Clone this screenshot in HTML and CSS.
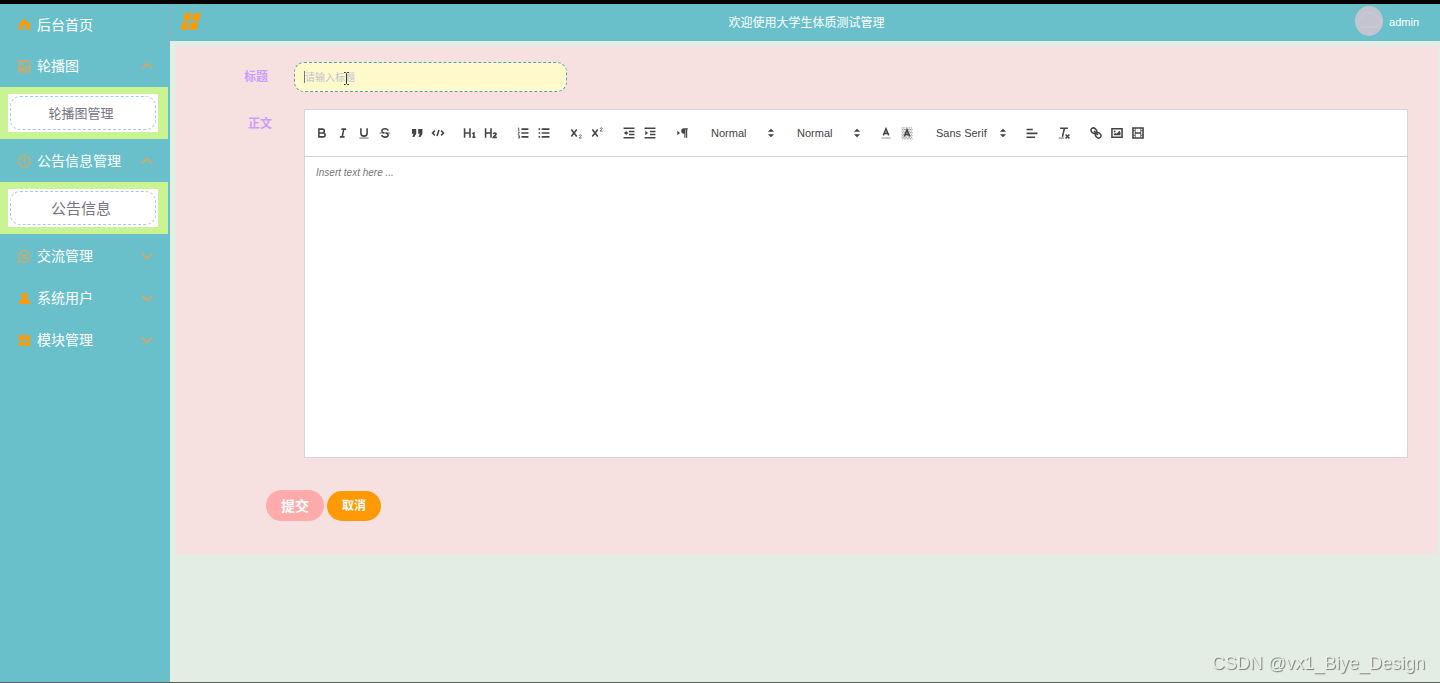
FILE: index.html
```
<!DOCTYPE html>
<html lang="zh-CN">
<head>
    <meta charset="UTF-8">
    <meta name="viewport" content="width=device-width, initial-scale=1.0">
    <link rel="stylesheet" href="styles.css">
    <title>大学生体质测试管理</title>
</head>
<body>

<div class="layout">
    <nav class="sidebar">
        <a href="#" class="menu-item menu-home">
            <svg class="menu-icon" viewBox="0 0 12 12"><path d="M6 .8 11 5v6H7.6V7.6a1.6 1.6 0 0 0-3.2 0V11H1V5z" fill="currentColor"/></svg>
            <span>后台首页</span>
        </a>
        <button type="button" class="menu-item">
            <svg class="menu-icon line" viewBox="0 0 12 12"><path d="M1 1h10v10H1zM1.500 9.500 4 7l1.500 1.300L8 5.500l2.800 3M3 9.500h6"/><circle cx="4" cy="4" r=".8"/></svg>
            <span>轮播图</span>
            <svg class="arrow" viewBox="0 0 12 12"><path d="M1 8.5 6 3.5l5 5"/></svg>
        </button>
        <div class="submenu">
            <a href="#" class="submenu-box"><span class="submenu-link">轮播图管理</span></a>
        </div>
        <button type="button" class="menu-item">
            <svg class="menu-icon line" viewBox="0 0 12 12"><circle cx="6" cy="6" r="5.3"/><path d="M6 3v4.500M6 8.300v1"/></svg>
            <span>公告信息管理</span>
            <svg class="arrow" viewBox="0 0 12 12"><path d="M1 8.5 6 3.5l5 5"/></svg>
        </button>
        <div class="submenu">
            <a href="#" class="submenu-box"><span class="submenu-link large">公告信息</span></a>
        </div>
        <button type="button" class="menu-item">
            <svg class="menu-icon line" viewBox="0 0 12 12"><path d="M1 11.200 1.700 9A5.200 5.200 0 1 1 3.500 10.600zM4 5.200h4M4 7.300h4"/></svg>
            <span>交流管理</span>
            <svg class="arrow" viewBox="0 0 12 12"><path d="m1 3.500 5 5 5-5"/></svg>
        </button>
        <button type="button" class="menu-item">
            <svg class="menu-icon" viewBox="0 0 12 12"><path d="M6 .8a3 3 0 0 1 1.700 5.500C9.900 7 11 8.800 11.300 11H.7C1 8.800 2.100 7 4.300 6.300A3 3 0 0 1 6 .8z" fill="currentColor"/></svg>
            <span>系统用户</span>
            <svg class="arrow" viewBox="0 0 12 12"><path d="m1 3.500 5 5 5-5"/></svg>
        </button>
        <button type="button" class="menu-item">
            <svg class="menu-icon" viewBox="0 0 12 12"><path d="M1 1h4.500v4.500H1zM6.500 1H11v4.500H6.500zM1 6.500h4.500V11H1zM6.500 6.500H11V11H6.500z" fill="currentColor"/></svg>
            <span>模块管理</span>
            <svg class="arrow" viewBox="0 0 12 12"><path d="m1 3.500 5 5 5-5"/></svg>
        </button>
    </nav>

    <div class="main">
        <header class="header">
            <button type="button" class="logo" aria-label="菜单">
                <svg width="22" height="20" viewBox="0 0 22 20"><path d="M5 1h6.500l-2 8H3zM13.500 1h7.500l-2 8h-7.500zM2.500 10.500H9L7 18H.5zM11 10.500h7.500l-2 7.500H9z" fill="#ff9a05"/></svg>
            </button>
            <h1 class="title">欢迎使用大学生体质测试管理</h1>
            <a href="#" class="user">
                <svg width="28" height="30" viewBox="0 0 28 30"><ellipse cx="14" cy="15" rx="14" ry="15" fill="#c3c4cf"/><path d="M8 21a4.500 4.500 0 0 1-1-9 7 7 0 0 1 13-2 5.500 5.500 0 0 1 1 11zM11 25h1M15 26h1" fill="none" stroke="#cdccd4"/></svg>
                <span>admin</span>
            </a>
        </header>

        <form class="panel">
            <div class="field">
                <label class="field-label" for="title">标题</label>
                <div class="title-wrap">
                    <input type="text" id="title" class="title-input" placeholder="请输入标题">
                    <span class="caret"></span>
                    <svg class="pointer" width="7" height="13" viewBox="0 0 7 13"><path d="M1 .5h1.500l1 1 1-1H6M3.500 1.500v10M1 12.500h1.500l1-1 1 1H6" fill="none" stroke="#333"/></svg>
                </div>
            </div>
            <div class="field">
                <label class="field-label wide" for="content">正文</label>
                <div class="editor">
                    <div class="toolbar">
                        <div class="group">
                            <button type="button" aria-label="bold"><svg viewBox="0 0 18 18"><path d="M5 4h4.500a2.500 2.500 0 0 1 0 5H5zM5 9h5.500a2.500 2.500 0 0 1 0 5H5z"/></svg></button>
                            <button type="button" aria-label="italic"><svg viewBox="0 0 18 18"><path d="M7 4h6M5 14h6M8 14l2-10"/></svg></button>
                            <button type="button" aria-label="underline"><svg viewBox="0 0 18 18"><path d="M5 3v6a4 4 0 0 0 8 0V3"/><path class="thin" d="M3 15.500h12"/></svg></button>
                            <button type="button" aria-label="strike"><svg viewBox="0 0 18 18"><path class="thin" d="M2 9h14"/><path d="M13 6c-.5-3-7.500-3.300-8 0 0 1.500 1 2.300 3 3M10 9c2 .6 3.200 1.500 3 3-.5 3.300-8 3-8-.3"/></svg></button>
                        </div>
                        <div class="group">
                            <button type="button" aria-label="blockquote"><svg viewBox="0 0 18 18"><path class="fill" d="M2.500 4H8v6l-2.500 4H3l1.500-4h-2zM10.500 4H16v6l-2.500 4H11l1.500-4h-2z"/></svg></button>
                            <button type="button" aria-label="code"><svg viewBox="0 0 18 18"><path d="M5 6 2 9l3 3M13 6l3 3-3 3M10.300 5 7.700 13"/></svg></button>
                        </div>
                        <div class="group">
                            <button type="button" aria-label="header 1"><svg viewBox="0 0 18 18"><path d="M2 3v12M9 3v12M2 9h7M12 10l2-1v5.500M12 14.500h4"/></svg></button>
                            <button type="button" aria-label="header 2"><svg viewBox="0 0 18 18"><path d="M2 3v12M9 3v12M2 9h7M12 10.300c.3-2 4-1.600 3.500.3-.3 1.400-2.500 2-3.500 4h4.500"/></svg></button>
                        </div>
                        <div class="group">
                            <button type="button" aria-label="ordered list"><svg viewBox="0 0 18 18"><path d="M7 4h9M7 9h9M7 14h9"/><path class="thin" d="M2.500 5.500h2M3.500 5.500v-3l-1 .5M2.500 7.800h2l-2 2.700h2M2.500 12.500h2v3h-2M3 14h1.500"/></svg></button>
                            <button type="button" aria-label="bullet list"><svg viewBox="0 0 18 18"><path d="M6 4h10M6 9h10M6 14h10M2 4h2M2 9h2M2 14h2"/></svg></button>
                        </div>
                        <div class="group">
                            <button type="button" aria-label="subscript"><svg viewBox="0 0 18 18"><path d="m3 4.500 7 9M10 4.500l-7 9"/><path class="thin" d="M13 12.500c.2-1.700 3-1.500 2.800 0-.2 1.200-2 1.500-2.800 3H16"/></svg></button>
                            <button type="button" aria-label="superscript"><svg viewBox="0 0 18 18"><path d="m3 4.500 7 9M10 4.500l-7 9"/><path class="thin" d="M13 3.500c.2-1.700 3-1.500 2.800 0-.2 1.200-2 1.500-2.800 3H16"/></svg></button>
                        </div>
                        <div class="group">
                            <button type="button" aria-label="outdent"><svg viewBox="0 0 18 18"><path d="M2 3h14M2 15h14M9 7h7M9 11h7M5 9h3"/><path class="fill" d="M6 6v6L2.500 9z"/></svg></button>
                            <button type="button" aria-label="indent"><svg viewBox="0 0 18 18"><path d="M2 3h14M2 15h14M9 7h7M9 11h7"/><path class="fill" d="M3 6v6l3.500-3z"/></svg></button>
                        </div>
                        <div class="group">
                            <button type="button" aria-label="direction"><svg viewBox="0 0 18 18"><path class="fill" d="M3 6v6l3.500-3zM16.500 3h-5a3.500 3.500 0 0 0 0 7h.5v5h1.500V4.500h.7V15h1.500V4.500h.8z"/></svg></button>
                        </div>
                        <div class="picker">
                            <select aria-label="size"><option>Normal</option></select>
                            <svg viewBox="0 0 18 18"><path class="fill" d="m5 7.500 4-4 4 4zM5 10.500l4 4 4-4z"/></svg>
                        </div>
                        <div class="picker">
                            <select aria-label="header"><option>Normal</option></select>
                            <svg viewBox="0 0 18 18"><path class="fill" d="m5 7.500 4-4 4 4zM5 10.500l4 4 4-4z"/></svg>
                        </div>
                        <div class="group">
                            <button type="button" aria-label="color"><svg viewBox="0 0 18 18"><path class="light" d="M3 15.500h12"/><path d="M5.500 12 9 3.500l3.500 8.500M6.500 9.500h5"/></svg></button>
                            <button type="button" aria-label="background"><svg viewBox="0 0 18 18"><path class="dots" d="M2 2.500h14M3 4.500h14M2 6.500h14M3 8.500h14M2 10.500h14M3 12.500h14M2 14.500h14M3 16.500h14"/><path d="M5.500 13.500 9 5l3.500 8.500M6.500 11h5"/></svg></button>
                        </div>
                        <div class="picker font">
                            <select aria-label="font"><option>Sans Serif</option></select>
                            <svg viewBox="0 0 18 18"><path class="fill" d="m5 7.500 4-4 4 4zM5 10.500l4 4 4-4z"/></svg>
                        </div>
                        <div class="group">
                            <button type="button" aria-label="align"><svg viewBox="0 0 18 18"><path d="M2 4.500h8M2 9.500h14M2 14.500h11"/></svg></button>
                        </div>
                        <div class="group">
                            <button type="button" aria-label="clean"><svg viewBox="0 0 18 18"><path d="M4 3h10M9.500 3 7 14"/><path class="thin" d="M2 15.500h7"/><path d="m11 11 5 5M16 11l-5 5"/></svg></button>
                        </div>
                        <div class="group">
                            <button type="button" aria-label="link"><svg viewBox="0 0 18 18"><path d="m6.500 6.500 5 5M8 9.500C6 10.500 2 7.500 2.500 5S6 1.500 8 3.500s2.500 3.500 1.500 4.500M10 8.500c2-1 6 2 5.500 4.500s-3.500 3.500-5.500 1.500S7.500 11 8.500 10"/></svg></button>
                            <button type="button" aria-label="image"><svg viewBox="0 0 18 18"><path d="M2.500 3.500h13v11h-13z"/><circle class="fill" cx="6" cy="7" r="1.200"/><path class="fill" d="M5 12v-2l2-1 1.500 1L12 6l1.500 2v4z"/></svg></button>
                            <button type="button" aria-label="video"><svg viewBox="0 0 18 18"><path d="M2.500 2.500h13v13h-13zM5 9h8"/><path class="thin" d="M5.500 3v12M12.500 3v12M2.500 6h3M2.500 12h3M12.500 6h3M12.500 12h3"/></svg></button>
                        </div>
                    </div>
                    <textarea id="content" class="content" placeholder="Insert text here ..."></textarea>
                </div>
            </div>
            <div class="actions">
                <button type="button" class="btn submit">提交</button>
                <button type="button" class="btn cancel">取消</button>
            </div>
        </form>
    </div>
</div>
<div class="watermark">CSDN @vx1_Biye_Design</div>

</body>
</html>
```
FILE: styles.css
```
* {
    box-sizing: border-box;
}

body {
    margin: 0;
    font-family: "Liberation Sans", "Noto Sans CJK SC", sans-serif;
    font-size: 12px;
    background-color: #e4ede4;
}

button {
    border: 0;
    padding: 0;
    background: none;
    font-family: inherit;
}

a {
    text-decoration: none;
}

.layout {
    display: flex;
    min-height: 100vh;
    border-top: 4px solid #000;
    border-bottom: 1px solid #59605c;
}

/* sidebar */
.sidebar {
    width: 170px;
    flex-shrink: 0;
    background-color: #69c0cb;
}

.menu-item {
    display: flex;
    align-items: center;
    gap: 6px;
    width: 100%;
    height: 42px;
    padding: 0 17px 0 18px;
    font-size: 14px;
    color: #fff;
    cursor: pointer;
}

.menu-item span {
    padding-bottom: 2px;
}

.menu-home {
    height: 41px;
}

.menu-icon {
    width: 13px;
    height: 13px;
    color: #ff9a05;
}

.line,
.arrow {
    fill: none;
    stroke: #f2a044;
}

.arrow {
    width: 12px;
    height: 12px;
    margin-left: auto;
    stroke-width: 1.3;
}

.submenu {
    width: 168px;
    padding: 7px 10px 7px 8px;
    margin-bottom: 1px;
    background-color: #caf394;
}

.submenu-box {
    display: block;
    padding: 2px;
    background-color: #fff;
}

.submenu-link {
    display: block;
    height: 34px;
    padding-right: 4px;
    line-height: 34px;
    border: 1px dashed #a6c8ee;
    border-radius: 10px;
    font-size: 13px;
    text-align: center;
    color: #75757f;
}

.submenu-link.large {
    font-size: 15px;
}

/* header */
.main {
    flex: 1;
    min-width: 0;
}

.header {
    display: flex;
    align-items: center;
    justify-content: space-between;
    height: 37px;
    padding: 0 21px 2px 9px;
    border-left: 1px solid #94a9d3;
    background-color: #69c0cb;
}

.logo,
.user {
    flex: 1;
    display: flex;
    align-items: center;
}

.title {
    margin: 0;
    padding-left: 14px;
    font-size: 12px;
    font-weight: normal;
    color: #fff;
}

.user {
    justify-content: flex-end;
    gap: 6px;
    font-size: 11px;
    color: #fff;
}

.user svg {
    margin-bottom: 2px;
}

/* form */
.panel {
    margin: 6px 2px 0 6px;
    padding: 15px 30px 33px 0;
    background-color: #f7e1e0;
}

.field {
    display: flex;
    margin-bottom: 17px;
}

.field-label {
    flex-shrink: 0;
    width: 118px;
    padding-right: 26px;
    line-height: 30px;
    font-weight: bold;
    text-align: right;
    color: #cc9cff;
}

.field-label.wide {
    width: 128px;
    padding-right: 32px;
}

.title-wrap {
    position: relative;
}

.title-input {
    display: block;
    width: 273px;
    height: 30px;
    padding: 0 10px;
    border: 1px dashed #4ba4b8;
    border-radius: 10px;
    background-color: #fff9cc;
    font-family: inherit;
    font-size: 10px;
    outline: none;
}

.title-input::placeholder {
    color: #c0c4cc;
}

.caret {
    position: absolute;
    left: 10px;
    top: 9px;
    width: 1px;
    height: 12px;
    background-color: #777;
}

.pointer {
    position: absolute;
    left: 49px;
    top: 10px;
}

.editor {
    flex: 1;
    min-width: 0;
    border: 1px solid #d9d5d8;
    background-color: #fff;
}

.toolbar {
    display: flex;
    flex-wrap: wrap;
    align-items: center;
    gap: 0 11px;
    min-height: 47px;
    padding: 0 6px;
    border-bottom: 1px solid #d1d1d1;
}

.group {
    display: flex;
}

.group button {
    display: flex;
    justify-content: center;
    width: 21px;
    height: 18px;
    align-items: center;
    cursor: pointer;
}

.toolbar svg {
    width: 14px;
    height: 14px;
    fill: none;
    stroke: #444;
    stroke-width: 2;
}

.toolbar .fill {
    fill: #444;
    stroke: none;
}

.toolbar .thin {
    stroke-width: 1;
}

.toolbar .light {
    stroke: #bbb;
}

.toolbar .dots {
    stroke-width: 1;
    stroke-dasharray: 1 1;
}

.picker {
    position: relative;
    width: 75px;
}

.picker.font {
    width: 82px;
}

.picker select {
    appearance: none;
    width: 100%;
    height: 18px;
    padding: 0 8px;
    border: 0;
    background: none;
    font-family: inherit;
    font-size: 11px;
    color: #444;
}

.picker svg {
    position: absolute;
    right: 0;
    top: 2px;
    pointer-events: none;
}

.content {
    display: block;
    width: 100%;
    height: 300px;
    padding: 9px 11px;
    border: 0;
    outline: none;
    resize: none;
    font-family: inherit;
    font-size: 10px;
    line-height: 14px;
}

.content::placeholder {
    font-style: italic;
    color: #777;
}

.actions {
    display: flex;
    align-items: center;
    gap: 3px;
    padding: 15px 0 0 90px;
}

.btn {
    padding: 0 15px 2px;
    border-radius: 16px;
    font-weight: bold;
    color: #fff;
    cursor: pointer;
}

.submit {
    height: 31px;
    font-size: 14px;
    background-color: #ffabab;
}

.cancel {
    height: 30px;
    font-size: 12px;
    background-color: #ff9a05;
}

.watermark {
    position: fixed;
    right: 15px;
    bottom: 9px;
    font-size: 18px;
    color: #e9efe9;
    text-shadow: 1px 1px 1px #777;
}
```
